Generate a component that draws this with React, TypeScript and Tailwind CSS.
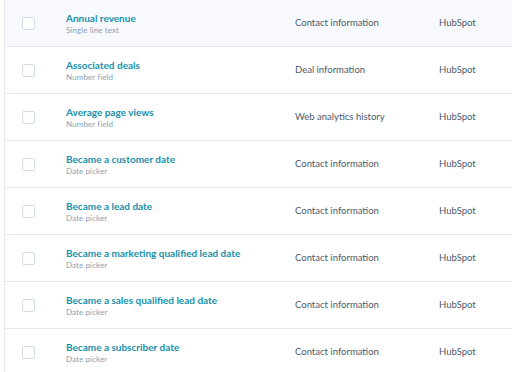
const rows = [
  { name: "Annual revenue", type: "Single line text", group: "Contact information", hover: true },
  { name: "Associated deals", type: "Number field", group: "Deal information" },
  { name: "Average page views", type: "Number field", group: "Web analytics history" },
  { name: "Became a customer date", type: "Date picker", group: "Contact information" },
  { name: "Became a lead date", type: "Date picker", group: "Contact information" },
  { name: "Became a marketing qualified lead date", type: "Date picker", group: "Contact information" },
  { name: "Became a sales qualified lead date", type: "Date picker", group: "Contact information" },
  { name: "Became a subscriber date", type: "Date picker", group: "Contact information" },
];

const App = () => {
  return (
    <div
      className="w-[512px] h-[372px] overflow-hidden bg-white"
      style={{ fontFamily: "Lato, 'Open Sans', sans-serif" }}
    >
      <div className="ml-[4px] border-l border-[#e6ebf1]">
        {rows.map((r) => (
          <div
            key={r.name}
            className={`flex items-center h-[47px] border-b border-[#e3e9f0] ${r.hover ? "bg-[#f7f9fc]" : "bg-white"}`}
          >
            <div className="w-[61px] pl-[17px] flex items-center">
              <div className="w-[13px] h-[13px] rounded-[2px] border-[1.5px] border-[#d3dde7] bg-white" />
            </div>
            <div className="w-[229px] flex flex-col pt-[1px]">
              <span className="text-[10px] leading-[14px] font-bold text-[#1591ad]">{r.name}</span>
              <span className="text-[8px] leading-[11px] tracking-[0.1px] text-[#8aa0b5]">{r.type}</span>
            </div>
            <div className="w-[144px] text-[9.5px] text-[#4a5a6b]">{r.group}</div>
            <div className="text-[9.5px] text-[#4a5a6b]">HubSpot</div>
          </div>
        ))}
      </div>
    </div>
  );
};

export default App;
